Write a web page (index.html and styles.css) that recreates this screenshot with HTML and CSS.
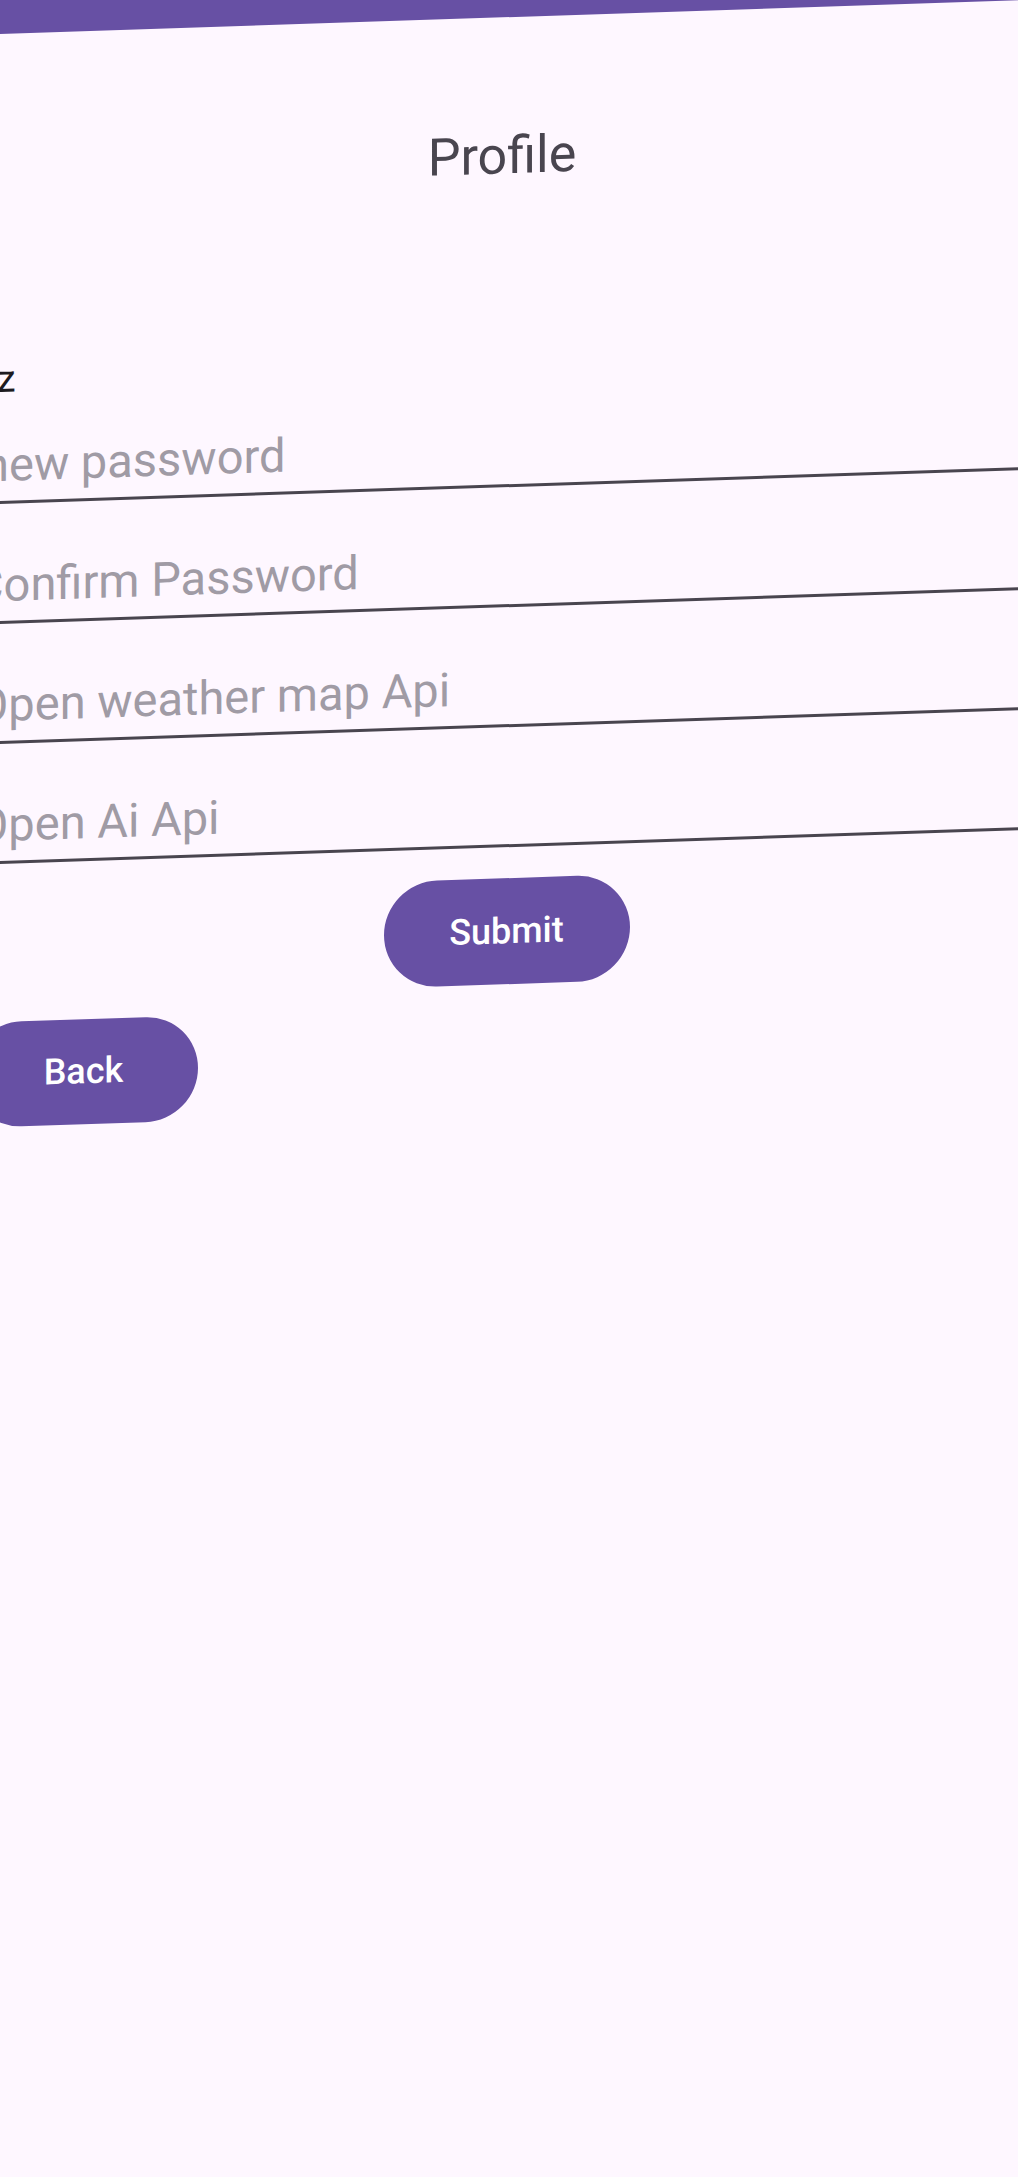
FILE: index.html
```html
<!DOCTYPE html>
<html lang="en">
<head>
<meta charset="utf-8">
<title>Profile</title>
<link rel="stylesheet" href="styles.css">
</head>
<body>
<div class="screen">
  <div class="topbar"></div>
  <h1 class="title">Profile</h1>
  <div class="form">
    <div class="user">xyz</div>
    <div class="field"><span class="ph ph-first">new password</span><div class="line"></div></div>
    <div class="field"><span class="ph ph-confirm">Confirm Password</span><div class="line"></div></div>
    <div class="field"><span class="ph">Open weather map Api</span><div class="line"></div></div>
    <div class="field"><span class="ph">Open Ai Api</span><div class="line"></div></div>
  </div>
  <div class="actions"><button class="btn submit">Submit</button></div>
  <div class="back-row"><button class="btn back">Back</button></div>
</div>
</body>
</html>
```
FILE: styles.css
```css
html {
  background: #fef7ff;
}
body {
  margin: 0;
  overflow: hidden;
  background: #fef7ff;
  font-family: "Roboto", "Noto Sans", sans-serif;
}
.screen {
  width: 1153px;
  height: 2300px;
  margin-left: -70px;
  background: #fef7ff;
  transform: skewY(-1.9deg);
  transform-origin: 70px 0;
  display: flex;
  flex-direction: column;
}
.topbar {
  height: 34px;
  background: #6750a4;
  flex: none;
}
.title {
  margin: 109.25px 0 0 0;
  padding-right: 9px;
  font-size: 52px;
  line-height: 60px;
  font-weight: 400;
  color: #49454f;
  text-align: center;
}
.form {
  margin-top: 153.75px;
  display: flex;
  flex-direction: column;
  gap: 53.65px;
}
.user {
  padding-left: 30px;
  font-size: 38px;
  line-height: 44px;
  color: #1d1b20;
  margin-bottom: -17.2px;
}
.field {
  display: flex;
  flex-direction: column;
}
.ph {
  padding-left: 46px;
  font-size: 47px;
  line-height: 56px;
  color: #a09ba5;
  white-space: nowrap;
}
.ph-first {
  padding-left: 53px;
}
.ph-confirm {
  padding-left: 43px;
}
.line {
  margin-top: 7.75px;
  height: 2.6px;
  background: #49454f;
}
.actions {
  margin-top: 31.2px;
  display: flex;
  justify-content: center;
}
.btn {
  border: none;
  background: #6750a4;
  color: #ffffff;
  font-family: "Roboto", "Noto Sans", sans-serif;
  font-weight: 500;
  font-size: 36px;
  padding: 0;
}
.submit {
  width: 246px;
  height: 106px;
  line-height: 106px;
  border-radius: 53px;
}
.back-row {
  margin-top: 21px;
  display: flex;
}
.back {
  margin-left: 39px;
  width: 229px;
  height: 105px;
  line-height: 105px;
  border-radius: 52.5px;
}
```
